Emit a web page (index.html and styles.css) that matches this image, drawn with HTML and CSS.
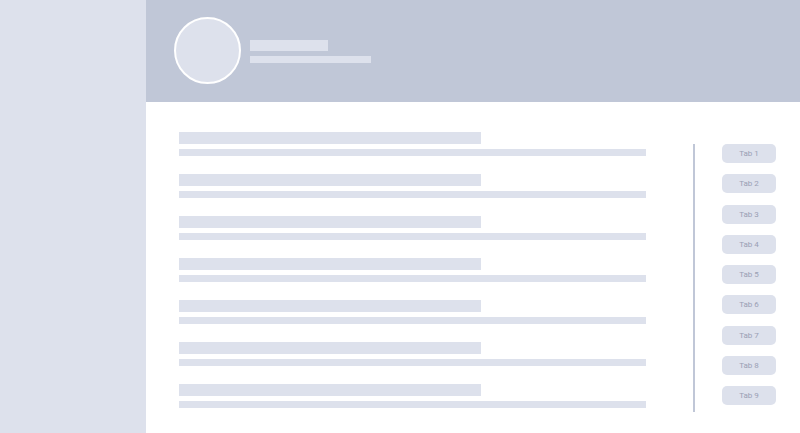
FILE: index.html
```html
<!DOCTYPE html>
<html lang="en">
<head>
    <meta charset="UTF-8">
    <title>Profile</title>
    <link rel="stylesheet" href="styles.css">
</head>
<body>
<div class="app">
    <div class="sidebar"></div>
    <div class="main">
        <div class="header">
            <div class="avatar"></div>
            <div class="header-text">
                <div class="bar bar-name"></div>
                <div class="bar bar-sub"></div>
            </div>
        </div>
        <div class="content">
            <div class="list">
                <div class="row"><div class="bar row-title"></div><div class="bar row-sub"></div></div>
                <div class="row"><div class="bar row-title"></div><div class="bar row-sub"></div></div>
                <div class="row"><div class="bar row-title"></div><div class="bar row-sub"></div></div>
                <div class="row"><div class="bar row-title"></div><div class="bar row-sub"></div></div>
                <div class="row"><div class="bar row-title"></div><div class="bar row-sub"></div></div>
                <div class="row"><div class="bar row-title"></div><div class="bar row-sub"></div></div>
                <div class="row"><div class="bar row-title"></div><div class="bar row-sub"></div></div>
            </div>
            <div class="tabs">
                <div class="tab">Tab 1</div>
                <div class="tab">Tab 2</div>
                <div class="tab">Tab 3</div>
                <div class="tab">Tab 4</div>
                <div class="tab">Tab 5</div>
                <div class="tab">Tab 6</div>
                <div class="tab">Tab 7</div>
                <div class="tab">Tab 8</div>
                <div class="tab">Tab 9</div>
            </div>
        </div>
    </div>
</div>
</body>
</html>
```

FILE: styles.css
```css
html,
body {
    margin: 0;
    padding: 0;
    width: 100%;
    height: 100%;
    overflow: hidden;
    background: #ffffff;
    font-family: Roboto, "Liberation Sans", sans-serif;
}

.app {
    display: flex;
    height: 433px;
}

.sidebar {
    width: 146px;
    flex-shrink: 0;
    background: #dde1ec;
}

.main {
    flex: 1;
    display: flex;
    flex-direction: column;
}

.header {
    height: 102px;
    background: #c0c7d7;
    display: flex;
    align-items: center;
    padding-left: 28px;
}

.avatar {
    width: 63px;
    height: 63px;
    border: 2px solid #ffffff;
    border-radius: 50%;
    background: #dde1ec;
    margin-right: 9px;
    margin-top: -1px;
}

.header-text {
    display: flex;
    flex-direction: column;
    gap: 5px;
}

.bar {
    background: #dde1ec;
}

.bar-name {
    width: 78px;
    height: 11px;
}

.bar-sub {
    width: 121px;
    height: 7px;
}

.content {
    display: flex;
    padding: 30px 0 0 33px;
}

.list {
    width: 467px;
    display: flex;
    flex-direction: column;
    gap: 18px;
}

.row {
    display: flex;
    flex-direction: column;
    gap: 5px;
}

.row-title {
    width: 302px;
    height: 12px;
}

.row-sub {
    width: 467px;
    height: 7px;
}

.tabs {
    margin: 12px 0 0 47px;
    border-left: 2px solid #c0c7d7;
    padding: 0 0 7px 27px;
    height: 261px;
    display: flex;
    flex-direction: column;
    justify-content: space-between;
}

.tab {
    width: 54px;
    height: 19px;
    line-height: 19px;
    border-radius: 5px;
    background: #dde1ec;
    color: #9aa0b4;
    font-size: 8px;
    text-align: center;
}
```
